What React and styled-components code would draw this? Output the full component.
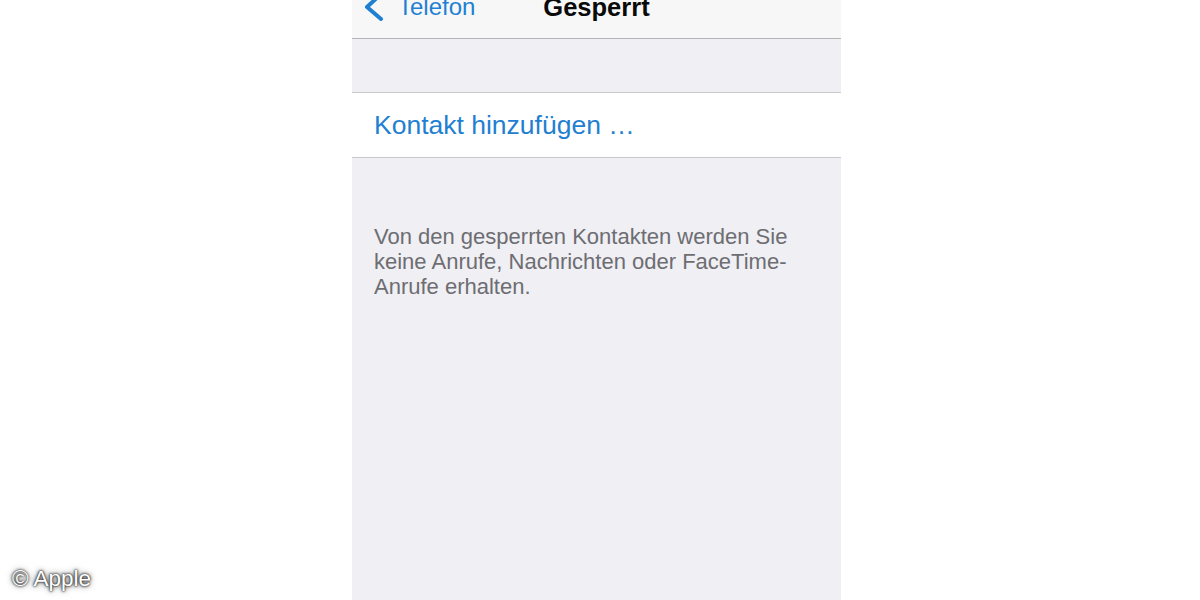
import React from "react";
import styled, { createGlobalStyle } from "styled-components";

const Global = createGlobalStyle`
  html, body { margin: 0; padding: 0; background: #ffffff; }
  body { font-family: "Liberation Sans", Arial, sans-serif; overflow: hidden; }
`;

const Page = styled.div`
  position: relative;
  width: 1200px;
  height: 600px;
  display: flex;
  justify-content: center;
  overflow: hidden;
`;

const Phone = styled.div`
  width: 489px;
  margin-right: 7px;
  height: 600px;
  background: #efeff4;
  display: flex;
  flex-direction: column;
`;

const NavBar = styled.div`
  height: 39px;
  flex-shrink: 0;
  box-sizing: border-box;
  background: #f7f7f8;
  border-bottom: 1px solid #b4b4b8;
`;

const NavContent = styled.div`
  display: grid;
  grid-template-columns: 1fr auto 1fr;
  align-items: center;
  height: 24px;
  margin-top: -5px;
  padding: 0 12px;
`;

const Back = styled.div`
  display: flex;
  align-items: center;
  gap: 14px;
  color: #1f80d2;
  font-size: 24px;
  line-height: 24px;
`;

const Title = styled.div`
  font-size: 25.5px;
  line-height: 24px;
  font-weight: bold;
  color: #0a0a0a;
`;

const Spacer = styled.div`
  height: 53px;
  flex-shrink: 0;
  border-bottom: 1px solid #c8c7cc;
`;

const Row = styled.div`
  height: 65px;
  flex-shrink: 0;
  box-sizing: border-box;
  background: #ffffff;
  border-bottom: 1px solid #c8c7cc;
  display: flex;
  align-items: center;
  padding: 0 22px;
  color: #1f80d2;
  font-size: 26.5px;
`;

const Footer = styled.div`
  padding: 66px 22px 0 22px;
  color: #6d6d72;
  font-size: 22px;
  line-height: 25px;
  max-width: 444px;
`;

const Watermark = styled.div`
  position: absolute;
  left: 12px;
  top: 566px;
  color: #ffffff;
  font-size: 22.5px;
  line-height: 26px;
  text-shadow: 0 0 2px #222, 0 0 3px #333, 0 0 6px #555;
`;

const Chevron = () => (
  <svg width="20" height="24" viewBox="0 0 20 24" style={{ overflow: "visible" }}>
    <polyline
      points="17,-1 3,12 17,24"
      fill="none"
      stroke="#1f80d2"
      strokeWidth="4"
      strokeLinecap="round"
      strokeLinejoin="round"
    />
  </svg>
);

export default function App() {
  return (
    <>
      <Global />
      <Page>
        <Phone>
          <NavBar>
            <NavContent>
              <Back>
                <Chevron />
                <span>Telefon</span>
              </Back>
              <Title>Gesperrt</Title>
              <div />
            </NavContent>
          </NavBar>
          <Spacer />
          <Row>Kontakt hinzufügen …</Row>
          <Footer>
            Von den gesperrten Kontakten werden Sie keine Anrufe, Nachrichten oder FaceTime-Anrufe erhalten.
          </Footer>
        </Phone>
        <Watermark>© Apple</Watermark>
      </Page>
    </>
  );
}
